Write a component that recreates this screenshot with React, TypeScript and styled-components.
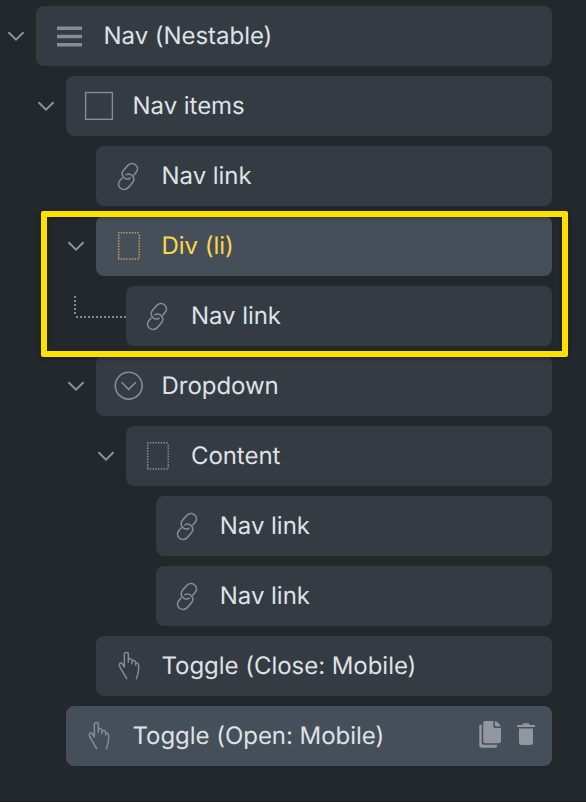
import React from "react";
import styled, { createGlobalStyle } from "styled-components";

const GlobalStyle = createGlobalStyle`
  *, *::before, *::after { box-sizing: border-box; }
  body { margin: 0; background: #23282c; }
`;

const Panel = styled.main`
  position: relative;
  height: 802px;
  padding: 6px 34px 0 0;
  background: #23282c;
  border-bottom: 1px solid #1d1a1e;
  overflow: hidden;
  font-family: Inter, sans-serif;
`;

const Tree = styled.ul`
  display: flex;
  flex-direction: column;
  gap: 10px;
  margin: 0;
  padding: 0;
  list-style: none;
`;

const Row = styled.li<{ $depth: number }>`
  display: flex;
  height: 60px;
  padding-left: ${(p) => p.$depth * 30}px;
`;

const Gutter = styled.div`
  position: relative;
  flex: 0 0 36px;
  display: flex;
  align-items: center;
  padding-left: 6px;
`;

const Connector = styled.svg`
  position: absolute;
  right: 0;
  top: 10px;
  width: 52px;
  height: 24px;
`;

const Card = styled.div<{ $lit?: boolean; $shift: number }>`
  flex: 1;
  display: flex;
  align-items: center;
  padding: 0 16px 0 ${(p) => 18 - p.$shift}px;
  border-radius: 8px;
  background: ${(p) => (p.$lit ? "#454f59" : "#343b43")};
`;

const IconSlot = styled.span<{ $gold?: boolean; $width: number }>`
  display: flex;
  flex: 0 0 ${(p) => p.$width}px;
  color: ${(p) => (p.$gold ? "#baa04f" : "#878c93")};
`;

const Label = styled.span<{ $gold?: boolean }>`
  flex: 1;
  color: ${(p) => (p.$gold ? "#ffd44f" : "#dfe2e5")};
  font-size: 24px;
  line-height: 30px;
  letter-spacing: -0.04px;
  text-rendering: geometricPrecision;
  white-space: nowrap;
`;

const Actions = styled.div`
  display: flex;
  align-items: center;
  gap: 13px;
  color: #92979e;
`;

const Highlight = styled.div`
  position: absolute;
  left: 41px;
  top: 211px;
  width: 527px;
  height: 146px;
  border: 6px solid #ffe100;
  border-radius: 2px;
  box-shadow: 0 1px 5px rgba(0, 0, 0, 0.3), inset 0 1px 5px rgba(0, 0, 0, 0.2);
`;

type IconName = "menu" | "square" | "link" | "dotted" | "dropdown" | "hand";

const Icon = ({ name }: { name: IconName }) => (
  <svg width="30" height="30" viewBox="0 0 30 30" fill="none" stroke="currentColor" strokeWidth="1.6">
    {name === "menu" && <path d="M3 7.3h25M3 15.5h25M3 23.7h25" strokeWidth="3.4" />}
    {name === "square" && <rect x="1.6" y="1.5" width="26.8" height="26.8" strokeWidth="1.4" />}
    {name === "link" && (
      <g strokeLinecap="round">
        <path d="M16 17.2C13.5 18.5 10.7 17.7 9.2 15.7 7.6 13.3 8 11 9.7 9L13.6 4.6C15.9 2 19.4 1.9 21.7 4 24 6.1 24 9.2 22 11.5L19.9 14" />
        <path d="M12 13.8C14.5 12.5 17.3 13.3 18.8 15.3 20.4 17.7 20 20 18.3 22L14.4 26.4C12.1 29 8.6 29.1 6.3 27 4 24.9 4 21.8 6 19.5L8.1 17" />
      </g>
    )}
    {name === "dotted" && (
      <path d="M4 1.7h22M4 28h22M4.7 3.7v23M25.3 3.7v23" strokeDasharray="1.5 1.24" strokeWidth="1.6" />
    )}
    {name === "dropdown" && (
      <>
        <circle cx="14.7" cy="14.7" r="13.4" />
        <path d="M8 11.7l6.7 6.7 6.7-6.7" strokeLinecap="round" />
      </>
    )}
    {name === "hand" && (
      <path
        transform="scale(.33333)"
        strokeWidth="4.4"
        strokeLinecap="round"
        strokeLinejoin="round"
        d="M38 83L17 47C14 39 18 35 22 36 26 38 28 42 31 48V9C31 3 43 3 43 9V34M43 27C46 20 54 22 54 30V38M54 31C58 26 65 28 65 36V42M65 35C70 34 74 38 74 46 75 60 73 66 67 83"
      />
    )}
  </svg>
);

const Chevron = () => (
  <svg width="20" height="20" viewBox="0 0 20 20" fill="none" stroke="#8e9396" strokeWidth="2" strokeLinecap="round">
    <path d="M3 6.7l7 7 7-7" />
  </svg>
);

const CopyIcon = () => (
  <svg width="24" height="30" viewBox="0 0 24 30" fill="currentColor">
    <path d="M6.3 0H14.4V5.1Q14.4 7 16.3 7H22V20.2Q22 22.3 19.9 22.3H6.3Q4.2 22.3 4.2 20.2V2.1Q4.2 0 6.3 0Z" />
    <path d="M15.8 .1Q19.7 1 21.7 5.5H17.3Q15.8 5.5 15.8 4Z" />
    <path d="M.3 4.3Q1 3.4 2.7 3.4V21.3Q2.7 23.8 5.2 23.8H18V25Q17.8 26.7 16.8 26.7H2.3Q.3 26.7 .3 24.7Z" />
  </svg>
);

const TrashIcon = () => (
  <svg width="20" height="30" viewBox="0 0 20 30" fill="currentColor">
    <path d="M1 4.1H6.2Q6.7 2.3 8 2.3H12Q13.3 2.3 13.8 4.1H19V6H1Z" />
    <path d="M3 7.4H17V21.6Q17 24 14.6 24H5.4Q3 24 3 21.6Z" />
  </svg>
);

interface TreeNode {
  label: string;
  icon: IconName;
  depth: number;
  open?: boolean;
  gold?: boolean;
  lit?: boolean;
  linked?: boolean;
  actions?: boolean;
  shift?: number;
  slot?: number;
}

const nodes: TreeNode[] = [
  { label: "Nav (Nestable)", icon: "menu", depth: 0, open: true, slot: 49.5 },
  { label: "Nav items", icon: "square", depth: 1, open: true, slot: 48.5 },
  { label: "Nav link", icon: "link", depth: 2 },
  { label: "Div (li)", icon: "dotted", depth: 2, open: true, gold: true, lit: true },
  { label: "Nav link", icon: "link", depth: 3, linked: true, shift: 0.6 },
  { label: "Dropdown", icon: "dropdown", depth: 2, open: true },
  { label: "Content", icon: "dotted", depth: 3, open: true, shift: 0.6 },
  { label: "Nav link", icon: "link", depth: 4, shift: 1.2, slot: 47 },
  { label: "Nav link", icon: "link", depth: 4, shift: 1.2, slot: 47 },
  { label: "Toggle (Close: Mobile)", icon: "hand", depth: 2 },
  { label: "Toggle (Open: Mobile)", icon: "hand", depth: 1, lit: true, actions: true, slot: 48.5 },
];

export default function App() {
  return (
    <>
      <GlobalStyle />
      <Panel>
        <Tree>
          {nodes.map((node, i) => (
            <Row key={i} $depth={node.depth}>
              <Gutter>
                {node.open && <Chevron />}
                {node.linked && (
                  <Connector viewBox="0 0 52 24" fill="none" stroke="#85888a" strokeWidth="2" strokeDasharray="2 2">
                    <path d="M1 0v20" />
                    <path d="M2 21h50" />
                  </Connector>
                )}
              </Gutter>
              <Card $lit={node.lit} $shift={node.shift ?? 0}>
                <IconSlot $gold={node.gold} $width={node.slot ?? 47.5}>
                  <Icon name={node.icon} />
                </IconSlot>
                <Label $gold={node.gold}>{node.label}</Label>
                {node.actions && (
                  <Actions>
                    <CopyIcon />
                    <TrashIcon />
                  </Actions>
                )}
              </Card>
            </Row>
          ))}
        </Tree>
        <Highlight />
      </Panel>
    </>
  );
}
